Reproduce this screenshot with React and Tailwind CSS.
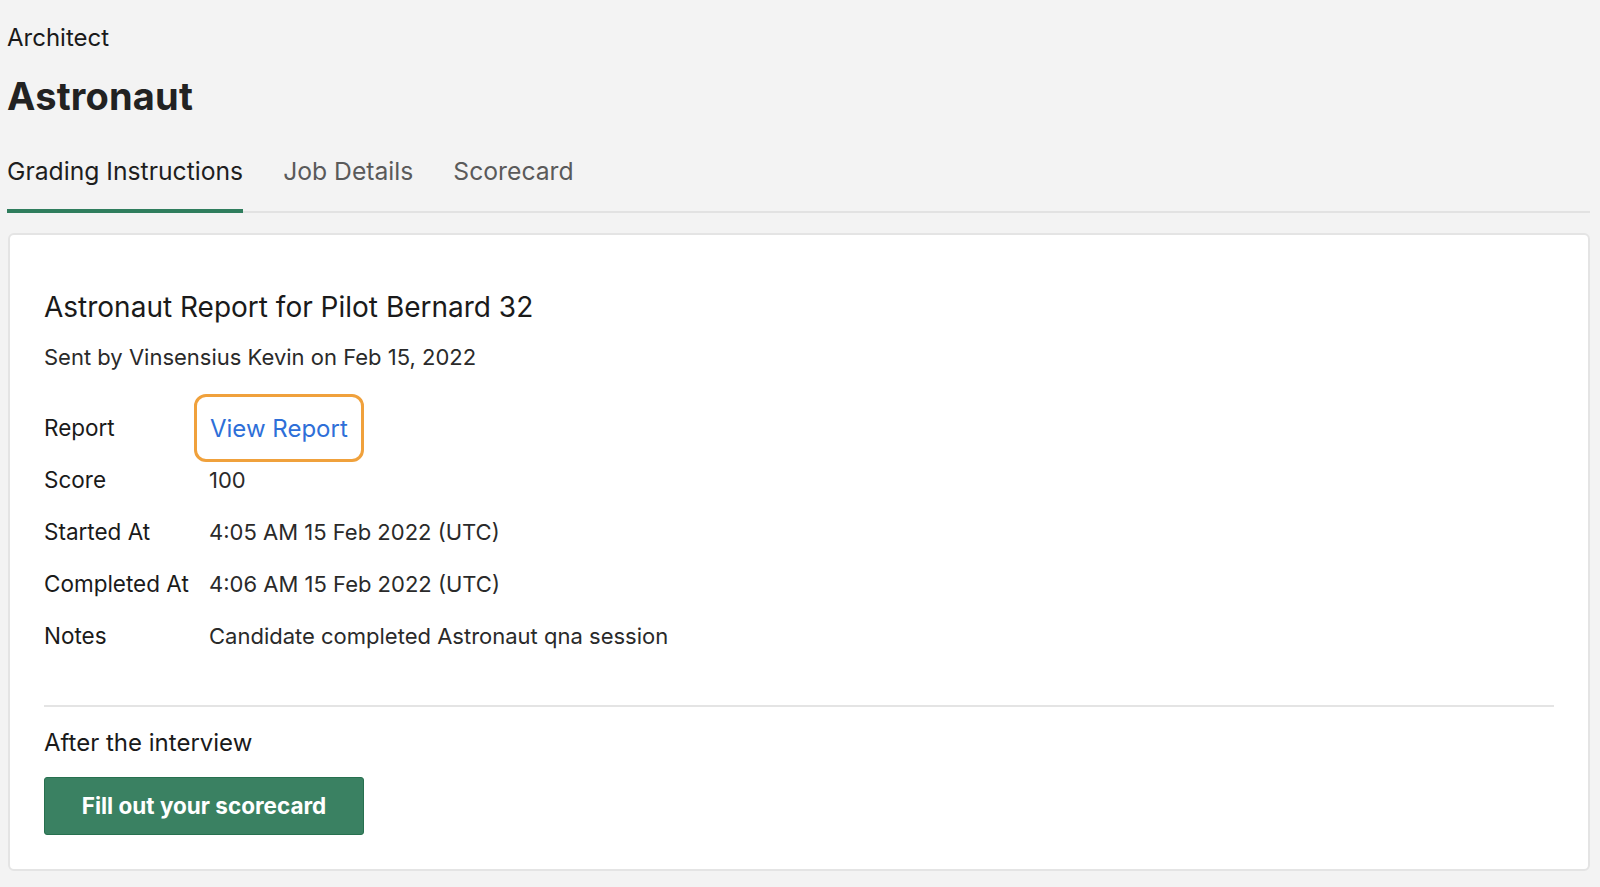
import React from 'react';

const rows = [
    { label: 'Score', value: '100' },
    { label: 'Started At', value: '4:05 AM 15 Feb 2022 (UTC)' },
    { label: 'Completed At', value: '4:06 AM 15 Feb 2022 (UTC)' },
    { label: 'Notes', value: 'Candidate completed Astronaut qna session' },
];

const tabs = ['Grading Instructions', 'Job Details', 'Scorecard'];

const App = () => {
    return (
        <div className="min-h-[887px] bg-[#f3f3f3] pl-[7px] pr-[10px] pt-[22px] text-[#1a1a1a]"
            style={{ fontFamily: 'Inter, "Noto Sans", sans-serif' }}>
            {/* header */}
            <div className="text-[24px] leading-[32px]">Architect</div>
            <h1 className="mt-[20px] text-[38px] font-bold leading-[44px] tracking-[0.2px] text-[#222]">Astronaut</h1>

            {/* tabs */}
            <div className="mt-[38px] flex gap-[40px] border-b-2 border-[#e2e2e2]">
                {tabs.map((t, i) => (
                    <div key={t}
                        className={i === 0
                            ? '-mb-[2px] border-b-4 border-[#2f7d5d] pb-[21px] text-[24.7px] leading-[30px] text-[#1e1e1e]'
                            : 'pb-[25px] text-[24.7px] leading-[30px] text-[#5a5a5a]'}>
                        {t}
                    </div>
                ))}
            </div>

            {/* card */}
            <div className="mt-[20px] ml-px rounded-md border-2 border-[#e4e4e4] bg-white px-[34px] pt-[53px] pb-[34px]">
                <div className="text-[28px] leading-[38px]">Astronaut Report for Pilot Bernard 32</div>
                <div className="mt-[16px] text-[22px] leading-[30px] text-[#2a2a2a]">Sent by Vinsensius Kevin on Feb 15, 2022</div>

                <div className="mt-[30px] flex flex-col">
                    <div className="flex h-[52px] items-center text-[22.5px]">
                        <div className="w-[150px] shrink-0">Report</div>
                        <div className="rounded-[12px] border-[3px] border-[#f0a13c] px-[13px] py-[13.5px] text-[24px] leading-[35px] text-[#2e6fd8]">
                            View Report
                        </div>
                    </div>
                    {rows.map(r => (
                        <div key={r.label} className="flex h-[52px] items-center text-[22.5px]">
                            <div className="w-[165px] shrink-0">{r.label}</div>
                            <div className="text-[22px] text-[#2a2a2a]">{r.value}</div>
                        </div>
                    ))}
                </div>

                <div className="mt-[43px] border-t-2 border-[#e4e4e4]" />

                <div className="mt-[20px] text-[24px] leading-[32px]">After the interview</div>
                <button className="mt-[18px] h-[58px] w-[320px] rounded-[3px] border border-[#27704f] bg-[#3a8162] text-[22.5px] font-bold text-white">
                    Fill out your scorecard
                </button>
            </div>
        </div>
    );
};

export default App;
